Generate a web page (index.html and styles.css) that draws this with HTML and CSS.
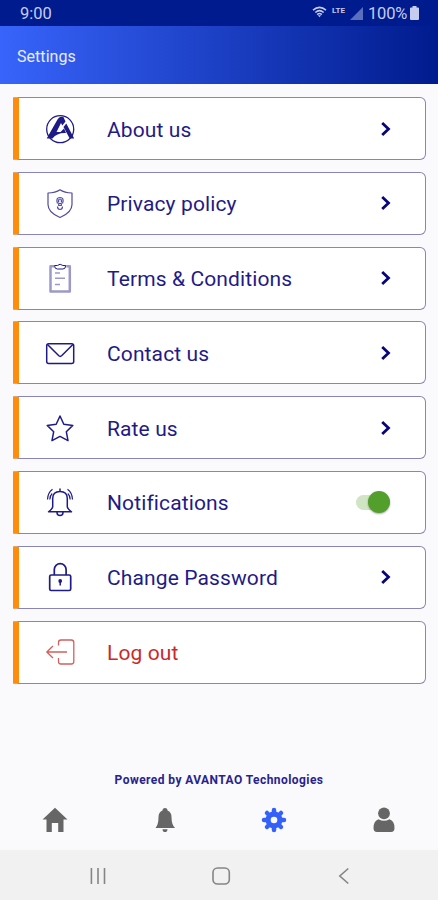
FILE: index.html
```html
<!DOCTYPE html>
<html lang="en">
<head>
<meta charset="utf-8">
<title>Settings</title>
<link rel="stylesheet" href="styles.css">
</head>
<body>
<div class="screen">
  <div class="status">
    <span class="time">9:00</span>
    <svg class="wifi" viewBox="0 0 16 14"><path d="M1 4.500Q8-1.500 15 4.500M3.500 7Q8 3 12.500 7M5.500 9.300Q8 7 10.500 9.300" fill="none" stroke="currentColor" stroke-width="1.600"/><path d="M6.300 10h3.400L8 12z" fill="currentColor"/></svg>
    <span class="lte">LTE</span>
    <svg class="signal" viewBox="0 0 13 13"><path d="M13 0v13H0z" fill="currentColor"/></svg>
    <span class="percent">100%</span>
    <svg class="battery" viewBox="0 0 9 14"><path d="M2.500 0h4v1.500H8q1 0 1 1V13q0 1-1 1H1q-1 0-1-1V2.500q0-1 1-1h1.500z" fill="currentColor"/></svg>
  </div>
  <header class="header">Settings</header>
  <main class="list">
    <div class="card">
      <svg class="icon" viewBox="0 0 32 32"><circle cx="16.200" cy="16.200" r="13.500" stroke-width="1.300"/><path class="solid" d="M2.700 25.500 13.500 6.500Q15 3.800 17 3.800h2.300l2.200 4.700-3.200 4-1.300-2.500-4.500 9h4l3.500-3.500 2 4.500Q13 19.500 8.500 25.500z"/><path class="solid" d="m22.300 10.500 7.900 15h-4.500L19.500 14z"/></svg>
      <span class="label">About us</span>
      <svg class="chevron" viewBox="0 0 12 16"><path d="m2.200 2 6.300 6-6.300 6"/></svg>
    </div>
    <div class="card">
      <svg class="icon thin" viewBox="0 0 32 32"><path d="M16 2.800q4.500 3.200 12 3.200v11.500q0 8-12 13-12-5-12-13V6q7.500 0 12-3.200z"/><path d="M13.500 16.500q-2-6 2.500-6t2.500 6M14.600 15.500v-2q0-1.500 1.400-1.500t1.400 1.500v2M14.700 16.500h2.600v2h-2.600zM13.500 19.500q0 3 2.500 3t2.500-3"/></svg>
      <span class="label">Privacy policy</span>
      <svg class="chevron" viewBox="0 0 12 16"><path d="m2.200 2 6.300 6-6.300 6"/></svg>
    </div>
    <div class="card">
      <svg class="icon" viewBox="0 0 32 32"><path class="pale" d="M10 4.200H6.500v25.300h19.300V4.200h-3.500" stroke-width="2.500"/><path d="M10.500 3.500h2.800q2.800-2.500 5.600 0h2.800q0 3.500-2.800 3.500h-5.600q-2.800 0-2.800-3.500z" stroke-width="1"/><path class="pale" d="M11 11h5M11 16.300h10M11 22.500h5" stroke-width="1.500"/></svg>
      <span class="label">Terms &amp; Conditions</span>
      <svg class="chevron" viewBox="0 0 12 16"><path d="m2.200 2 6.300 6-6.300 6"/></svg>
    </div>
    <div class="card">
      <svg class="icon" viewBox="0 0 32 32"><rect x="2.700" y="6.700" width="27" height="19.800" rx="2"/><path d="m3.500 7.500 11.300 11.300q1.400 1.200 2.800 0L28.900 7.500"/></svg>
      <span class="label">Contact us</span>
      <svg class="chevron" viewBox="0 0 12 16"><path d="m2.200 2 6.300 6-6.300 6"/></svg>
    </div>
    <div class="card">
      <svg class="icon" viewBox="0 0 32 32"><path d="m16 4 3.800 8.300 9 1.100-6.500 6.300 1.700 9-8-4.300-8 4.300 1.700-9-6.500-6.300 9-1.100z"/></svg>
      <span class="label">Rate us</span>
      <svg class="chevron" viewBox="0 0 12 16"><path d="m2.200 2 6.300 6-6.300 6"/></svg>
    </div>
    <div class="card">
      <svg class="icon" viewBox="0 0 32 32"><path d="M8.700 21V12.500q0-7 7.300-7t7.300 7V21q1.200 3 4.200 4.800H4.500Q7.500 24 8.700 21zM16 2.500v3M13 26.500q0 3 3 3t3-3"/><path d="M8.500 3.200Q3.800 6.500 3.500 13.500M23.500 3.200q4.700 3.300 5 10.300M8.200 7.500Q6 9.500 5.800 13.500M23.800 7.500Q26 9.500 26.200 13.500" stroke-width="1.200"/></svg>
      <span class="label">Notifications</span>
      <span class="switch"><span class="knob"></span></span>
    </div>
    <div class="card">
      <svg class="icon" viewBox="0 0 32 32"><rect x="5.700" y="14" width="21" height="15.500" rx="1.500" stroke-width="1.700"/><path d="M10.300 14V8.500a5.900 5.900 0 0 1 11.800 0V14" stroke-width="1.700"/><circle class="solid" cx="16.200" cy="20" r="1.900"/><path d="M16.200 20v4.500"/></svg>
      <span class="label">Change Password</span>
      <svg class="chevron" viewBox="0 0 12 16"><path d="m2.200 2 6.300 6-6.300 6"/></svg>
    </div>
    <div class="card logout">
      <svg class="icon" viewBox="0 0 32 32"><path d="M14.500 9.500V6.500q0-2.500 2.500-2.500h10.300q2.500 0 2.500 2.500v19q0 2.500-2.500 2.500H17q-2.500 0-2.500-2.500V22M23 16H3M9 10l-6.200 6L9 22"/></svg>
      <span class="label">Log out</span>
    </div>
  </main>
  <footer class="credit">Powered by AVANTAO Technologies</footer>
  <nav class="tabs">
    <svg viewBox="0 0 28 28"><path d="M14 1.700 26.500 13.500h-4V26h-5.300v-9h-6.400v9H5.500V13.500h-4z"/></svg>
    <svg viewBox="0 0 28 28"><path d="M11.500 4.500a2.500 2.500 0 1 1 5 0Q20.500 6 20.500 11q0 7.500 3.500 11H4.500Q7.500 18.500 7.500 11q0-5 4-6.500zM11.500 23.200h5q0 2.800-2.500 2.800t-2.500-2.800z"/></svg>
    <svg class="active" viewBox="0 0 28 28"><path fill-rule="evenodd" d="M14 5.500a8.500 8.500 0 1 0 0 17 8.500 8.500 0 0 0 0-17zm0 5.200a3.300 3.300 0 1 1 0 6.600 3.300 3.300 0 0 1 0-6.600z"/><path d="M14 4v3M14 21v3M4 14h3M21 14h3M7 7l2 2M19 19l2 2M7 21l2-2M19 9l2-2" stroke="currentColor" stroke-width="4.500" stroke-linecap="round"/></svg>
    <svg viewBox="0 0 28 28"><circle cx="14" cy="7.300" r="5.900"/><path d="M8.500 13.300q5.500 3 11 0 5 1.700 5 8.700 0 4-3.500 4H7q-3.500 0-3.500-4 0-7 5-8.700z"/></svg>
  </nav>
  <div class="system">
    <svg viewBox="0 0 20 20"><path d="M3.400 2v16M10 2v16M16.500 2v16"/></svg>
    <svg viewBox="0 0 20 20"><rect x="2" y="2" width="16.300" height="16" rx="4.500"/></svg>
    <svg viewBox="0 0 20 20"><path d="m14.300 2.500-8.500 7.500 8.500 7.500"/></svg>
  </div>
</div>
</body>
</html>
```

FILE: styles.css
```css
* { box-sizing: border-box; }
body { margin: 0; background: #fafafc; font-family: Roboto, sans-serif; }
.screen { width: 438px; height: 900px; display: flex; flex-direction: column; overflow: hidden; }
svg { display: block; flex: none; }

.status { height: 26px; background: #001b8d; color: #c5cced; display: flex; align-items: center; padding: 1px 19px 0 20px; font-size: 16.5px; }
.time { margin-right: auto; }
.wifi { width: 15px; height: 13px; margin-right: 5px; margin-top: -2px; }
.lte { font-size: 8px; font-weight: 700; width: 14px; margin-right: 4px; margin-top: -7px; }
.signal { width: 13px; height: 13px; color: #5a70be; margin-right: 5px; }
.percent { width: 39px; margin-right: 3px; letter-spacing: -.2px; }
.battery { width: 9px; height: 14px; margin-top: -1px; }

.header { height: 58px; padding: 3px 0 0 17px; display: flex; align-items: center; color: #e6ecff; font-size: 16px; letter-spacing: .05px; background: linear-gradient(90deg, #3864fb, #001b8d); }

.list { display: flex; flex-direction: column; gap: 11.8px; padding: 13px 12px 0 13px; }
.card { height: 63px; display: flex; align-items: center; padding: 0 34px 0 25px; color: #1f1b86; background: #fff; border: 1.4px solid #8885b9; border-left: 6px solid #ff8c0a; border-radius: 1px 6px 6px 1px; }
.icon { width: 32px; height: 32px; margin-right: 31px; fill: none; stroke: currentColor; stroke-width: 1.5; stroke-linejoin: round; }
.thin { stroke: #4f4b9f; stroke-width: 1.2; }
.solid { fill: currentColor; stroke: none; }
.pale { stroke: #9c99c8; }
.label { flex: 1; font-size: 21px; letter-spacing: .12px; padding-top: 2px; white-space: nowrap; }
.chevron { width: 12px; height: 16px; margin-right: -1px; fill: none; stroke: #08057c; stroke-width: 2.8; }
.logout { color: #c92a2a; }
.logout .icon { stroke: #d2605e; stroke-width: 1.3; }

.switch { width: 34px; height: 15px; margin-right: 1px; border-radius: 8px; background: #cfe5c3; display: flex; align-items: center; justify-content: flex-end; }
.knob { width: 22px; height: 22px; border-radius: 50%; background: #539f2c; box-shadow: 0 1px 2px #0005; }

.credit { margin-top: auto; text-align: center; color: #28238c; font-size: 12px; font-weight: 700; letter-spacing: .43px; line-height: 16px; }
.tabs { height: 62px; display: flex; justify-content: space-between; padding: 18px 40px 0 41px; color: #666; }
.tabs svg { width: 28px; height: 28px; fill: currentColor; }
.tabs .active { color: #3461f7; }
.system { height: 50px; background: #f1f1f1; display: flex; justify-content: space-between; align-items: center; padding: 2px 84px 0 88px; }
.system svg { width: 20px; height: 20px; fill: none; stroke: #858585; stroke-width: 1.6; }
```
